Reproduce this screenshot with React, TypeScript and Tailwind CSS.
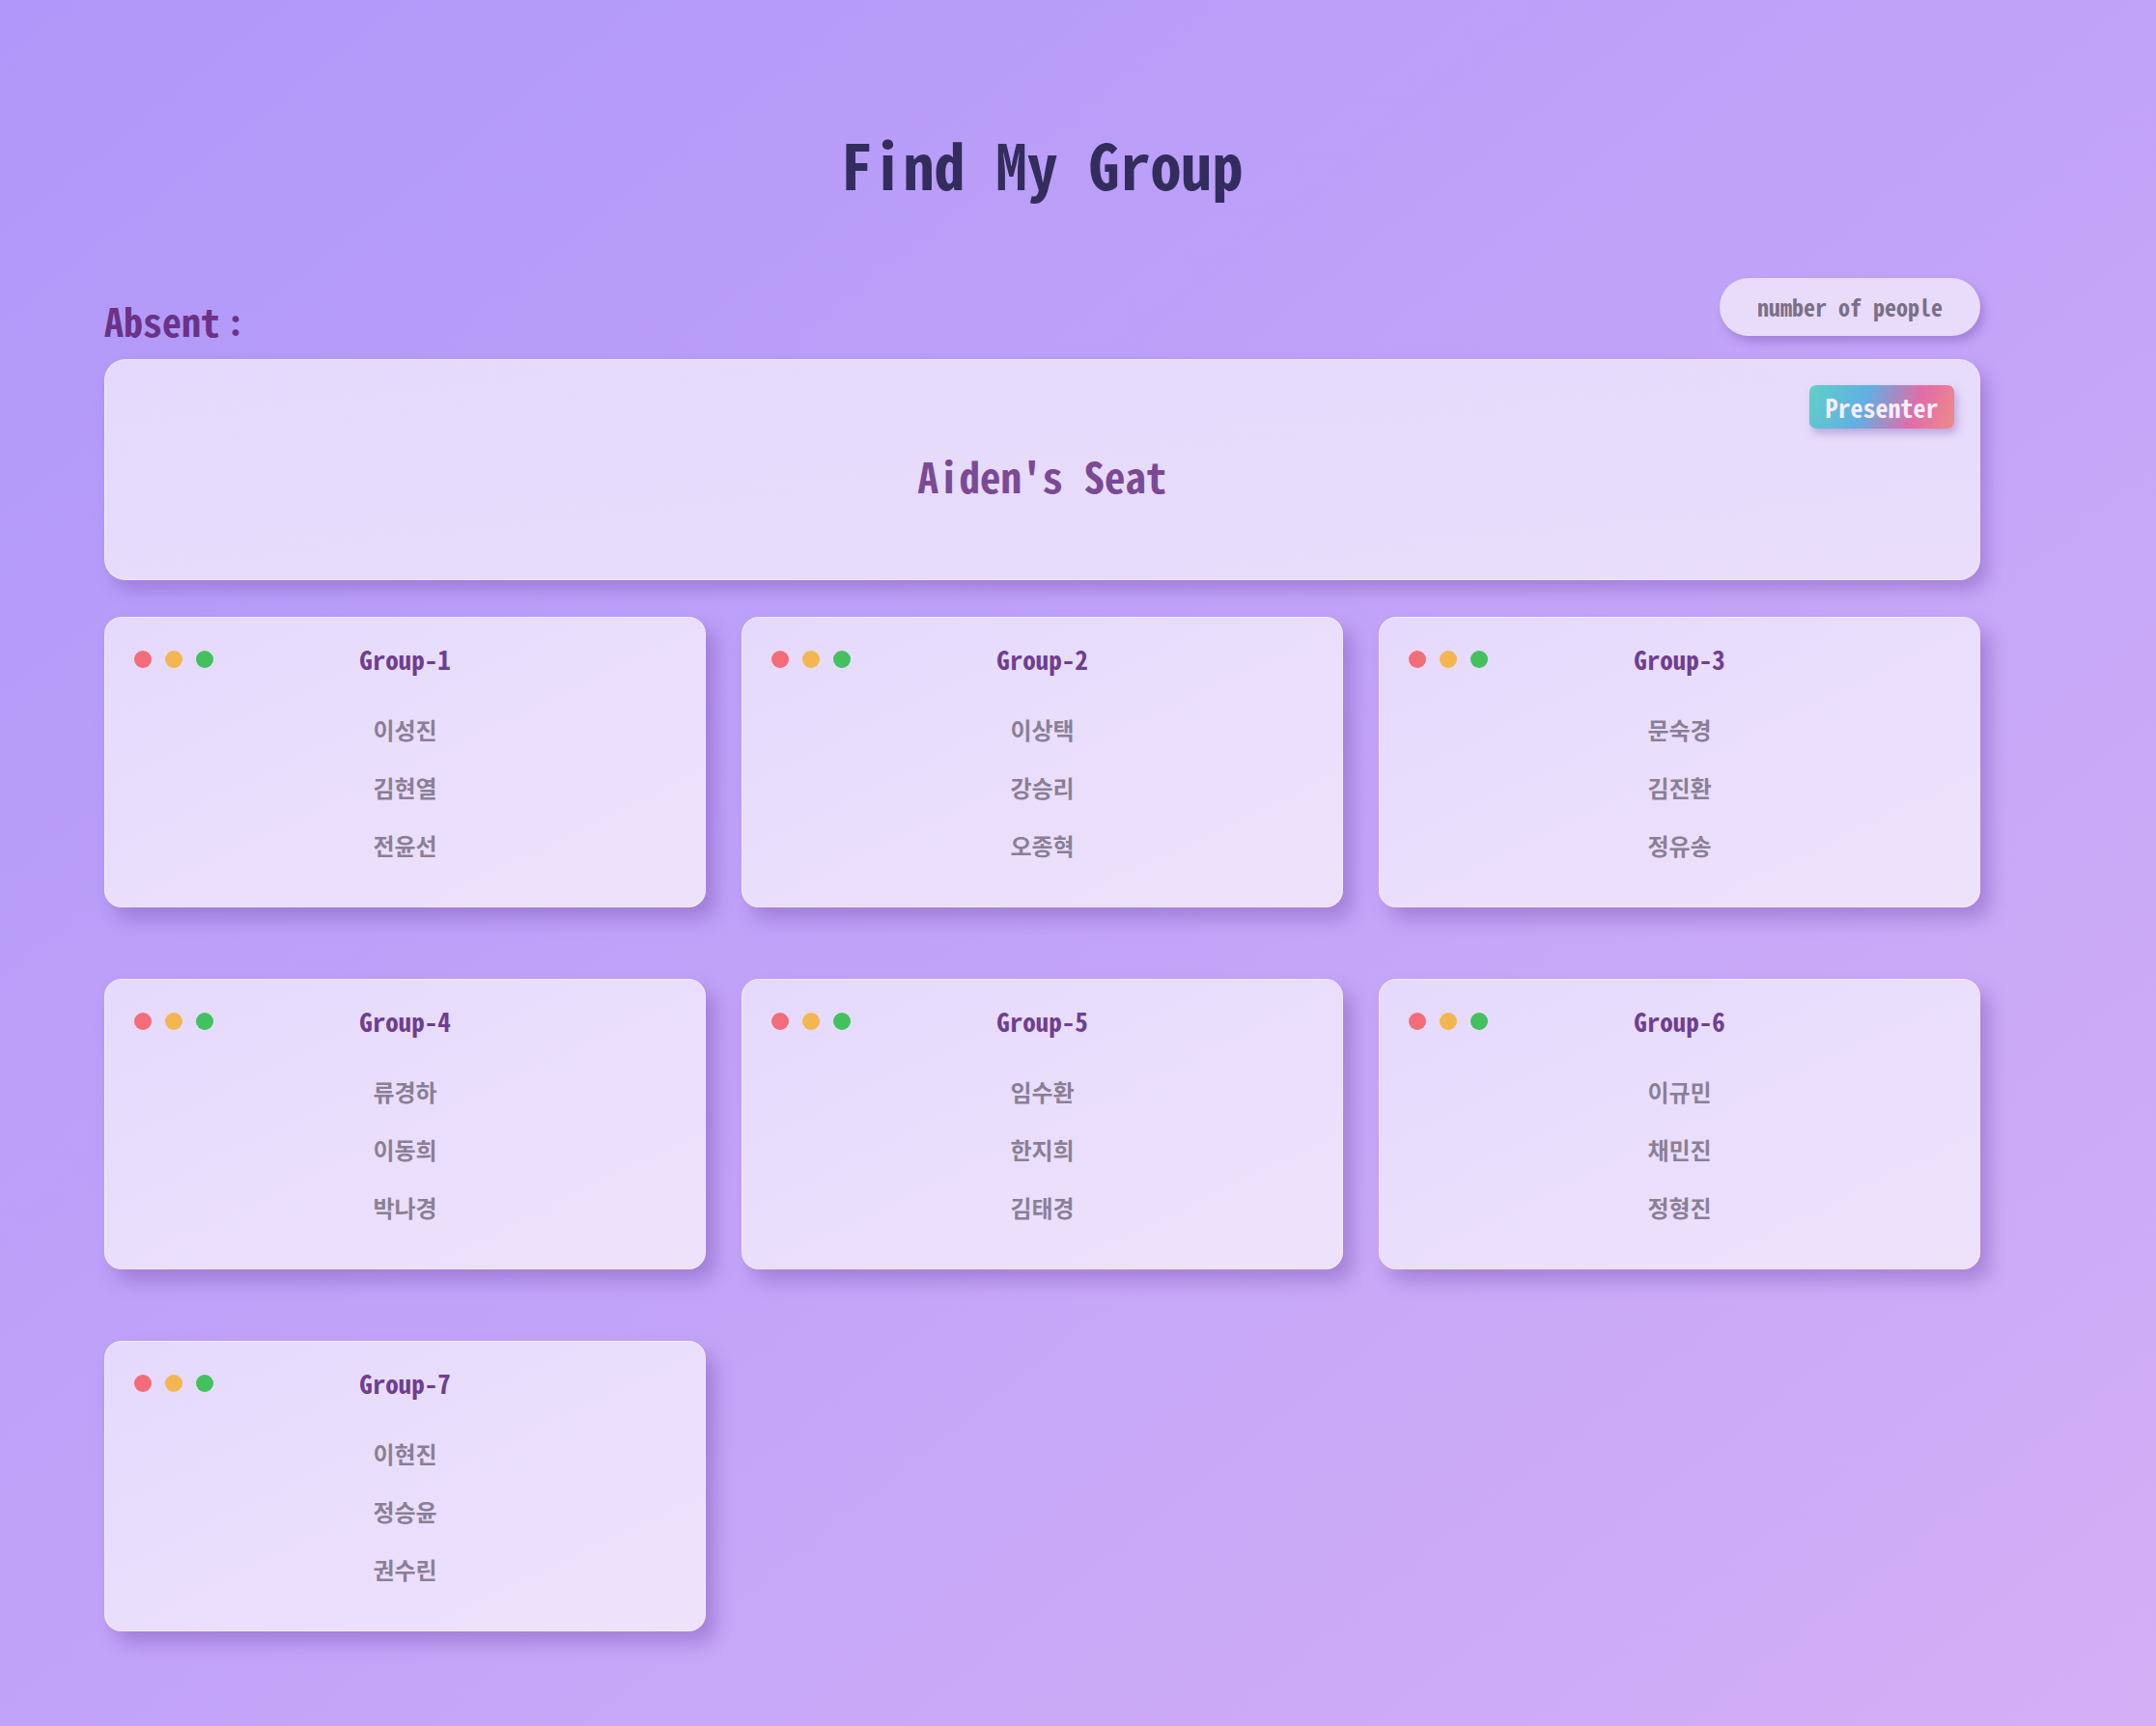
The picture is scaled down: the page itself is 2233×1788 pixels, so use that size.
const groups = [
  { name: 'Group-1', members: ['이성진', '김현열', '전윤선'] },
  { name: 'Group-2', members: ['이상택', '강승리', '오종혁'] },
  { name: 'Group-3', members: ['문숙경', '김진환', '정유송'] },
  { name: 'Group-4', members: ['류경하', '이동희', '박나경'] },
  { name: 'Group-5', members: ['임수환', '한지희', '김태경'] },
  { name: 'Group-6', members: ['이규민', '채민진', '정형진'] },
  { name: 'Group-7', members: ['이현진', '정승윤', '권수린'] },
];

const mono = "font-['Noto_Sans_Mono_CJK_KR','Noto_Sans_CJK_KR','DejaVu_Sans_Mono',monospace]";

const GroupCard = ({ name, members }: { name: string; members: string[] }) => {
  return (
    <div className="h-[301px] rounded-[18px] border border-white/40 bg-gradient-to-br from-[#e5dafd] to-[#eee2fb] shadow-[10px_12px_18px_rgba(110,70,170,0.38)]">
      <div className="grid h-[86px] grid-cols-[1fr_auto_1fr] items-center px-[30px]">
        <div className="flex gap-[14px]">
          <span className="h-[18px] w-[18px] rounded-full bg-[#f26d78]" />
          <span className="h-[18px] w-[18px] rounded-full bg-[#f4b650]" />
          <span className="h-[18px] w-[18px] rounded-full bg-[#42c15e]" />
        </div>
        <h3 className={`${mono} text-[27px] font-bold text-[#6f3e91]`}>{name}</h3>
        <div />
      </div>
      <ul className="flex flex-col items-center">
        {members.map((m) => (
          <li key={m} className="font-['Noto_Sans_CJK_KR',sans-serif] text-[24px] font-bold leading-[60px] text-[#8a7f97]">
            {m}
          </li>
        ))}
      </ul>
    </div>
  );
};

export default function App() {
  return (
    <main className="min-h-screen bg-gradient-to-br from-[#b097f9] via-[#c1a3f8] to-[#d4aff6] pb-[98px] pt-[137px]">
      <div className="ml-[108px] w-[1943px]">
        <h1 className={`${mono} text-center text-[64px] font-bold leading-[64px] text-[#332d5e]`}>Find My Group</h1>

        <div className="mt-[87px] flex h-[60px] items-end justify-between">
          <h2 className={`${mono} -mb-[4px] flex text-[40px] font-bold leading-[40px] text-[#6a3387]`}>
            Absent<span className="ml-[7px] text-[36px]">:</span>
          </h2>
          <button className={`${mono} h-[60px] w-[270px] rounded-[30px] bg-[#e9dcfb] text-[24px] font-bold text-[#7a7088] shadow-[4px_6px_10px_rgba(110,70,170,0.35)]`}>
            number of people
          </button>
        </div>

        <section className="relative mt-[24px] flex h-[229px] items-center justify-center rounded-[22px] border border-white/40 bg-gradient-to-br from-[#e5dafd] to-[#e9ddfb] shadow-[8px_10px_16px_rgba(110,70,170,0.35)]">
          <span className="absolute right-[26px] top-[26px] flex h-[45px] w-[150px] items-center justify-center rounded-[7px] bg-[linear-gradient(110deg,#5fd0c8_0%,#62afe3_38%,#e26ca8_72%,#ec8c88_100%)] shadow-[3px_5px_8px_rgba(110,70,170,0.35)]">
            <span className={`${mono} text-[26px] font-bold text-[#f6eefb]`}>Presenter</span>
          </span>
          <p className={`${mono} mt-[12px] text-[43px] font-bold text-[#7b4a95]`}>Aiden's Seat</p>
        </section>

        <div className="mt-[38px] grid grid-cols-3 gap-x-[37px] gap-y-[74px]">
          {groups.map((g) => (
            <GroupCard key={g.name} name={g.name} members={g.members} />
          ))}
        </div>
      </div>
    </main>
  );
}
